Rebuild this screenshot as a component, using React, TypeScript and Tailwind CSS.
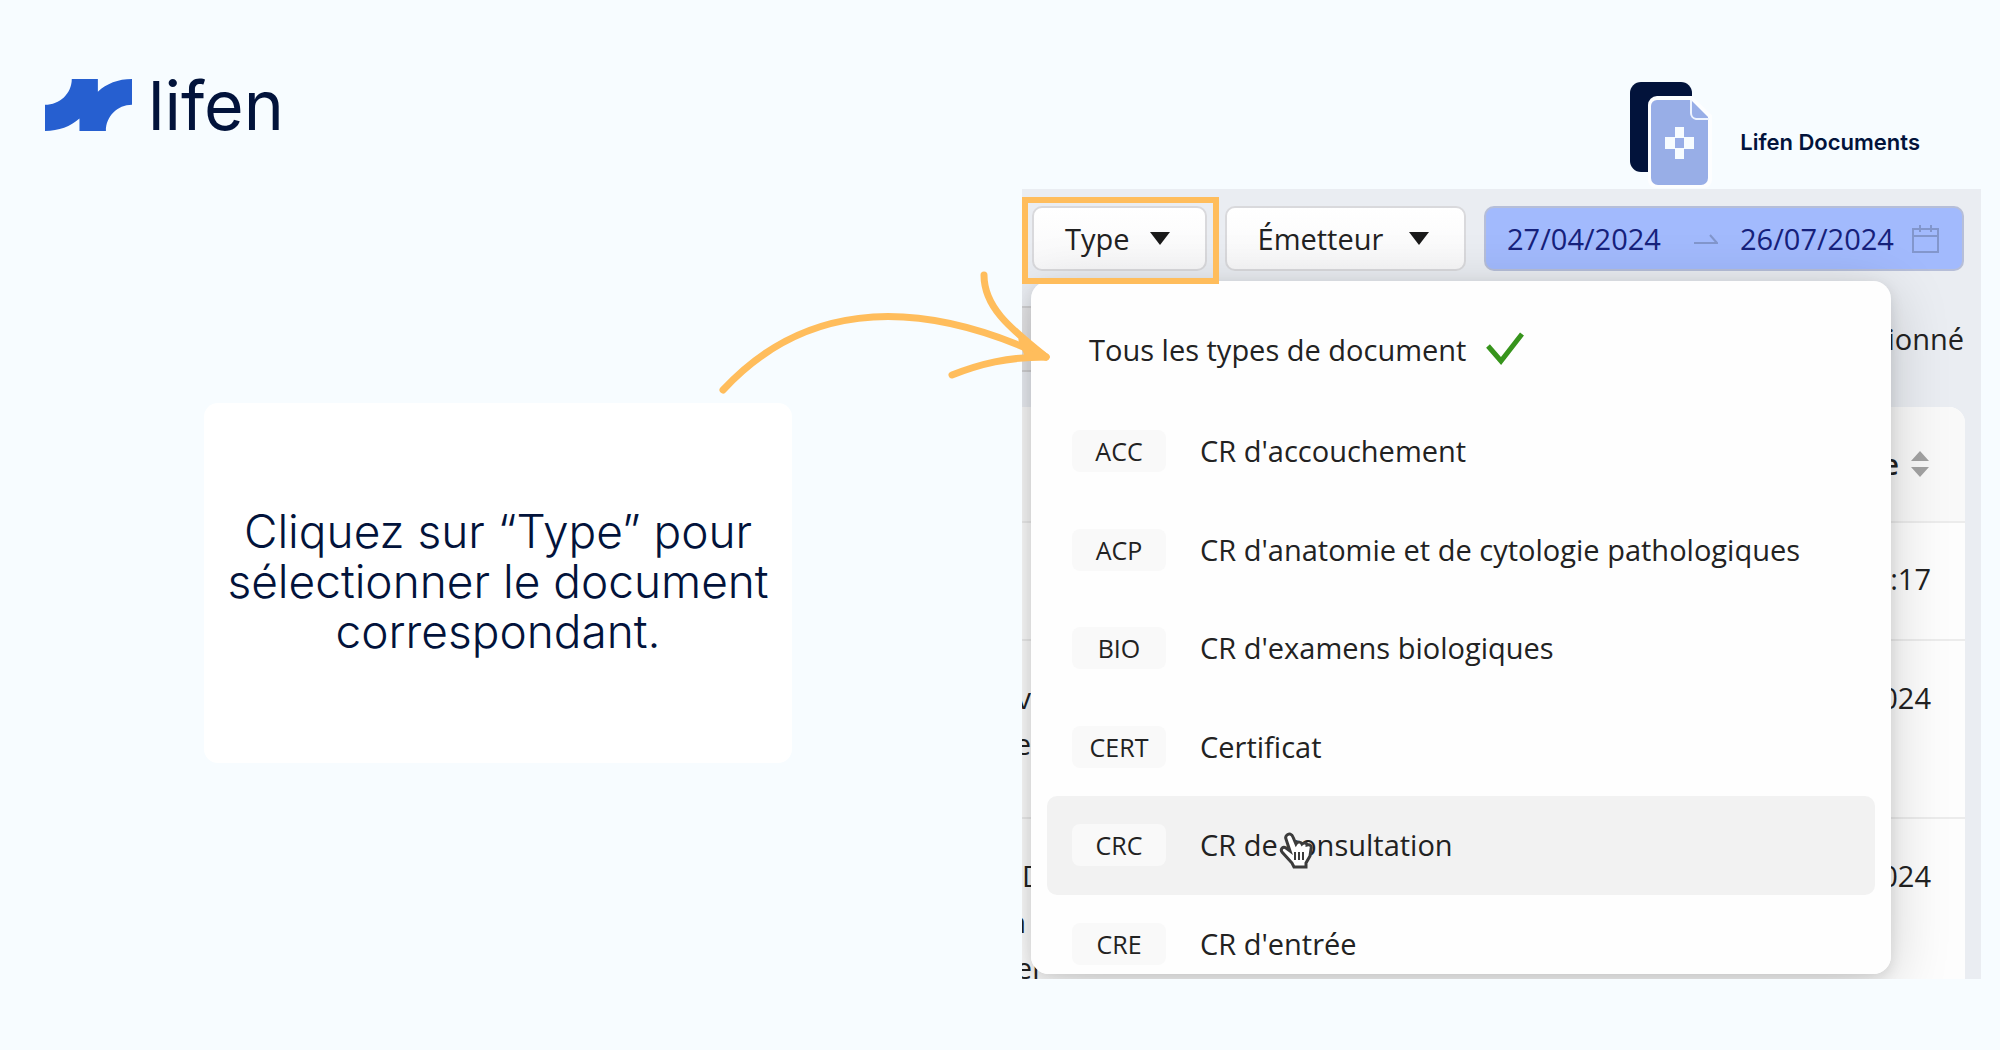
import { useState } from 'react'

const documentTypes = [
  { code: 'ACC', label: "CR d'accouchement" },
  { code: 'ACP', label: "CR d'anatomie et de cytologie pathologiques" },
  { code: 'BIO', label: "CR d'examens biologiques" },
  { code: 'CERT', label: 'Certificat' },
  { code: 'CRC', label: 'CR de consultation' },
  { code: 'CRE', label: "CR d'entrée" },
]

function LifenLogo() {
  return (
    <a href="#" className="flex items-center gap-4">
      <svg viewBox="46 57 260 155" className="w-[87px] h-[52px]" aria-hidden="true">
        <path
          d="M46 134C90 134 126 101 126 57H204V95C230 71 264 57 306 57V134C262 134 228 169 228 212H149V175C122 199 88 212 46 212Z"
          fill="#265fd0"
        />
      </svg>
      <span className="text-[68px] leading-[68px] text-[#02133b]">lifen</span>
    </a>
  )
}

function DocumentsIcon() {
  return (
    <svg viewBox="0 0 82 108" className="w-[82px] h-[108px]" aria-hidden="true">
      <rect x="0" y="2" width="62" height="90" rx="11" fill="#02133b" />
      <path d="M27 16H62L82 35V100A8 8 0 0 1 74 108H26A8 8 0 0 1 18 100V25A9 9 0 0 1 27 16Z" fill="#fdfeff" />
      <path d="M27 20H61L78 37V98A7 7 0 0 1 71 105H28A7 7 0 0 1 21 98V26A6 6 0 0 1 27 20Z" fill="#98aee7" />
      <path d="M61 20V33A6 6 0 0 0 66 39H79" fill="none" stroke="#eef4ff" strokeWidth="2" />
      <path d="M45 47H54V57H64V69H54V79H45V69H35V57H45Z" fill="#f7fcff" />
      <rect x="45" y="58" width="9" height="10" fill="#98aee7" />
    </svg>
  )
}

function Caret() {
  return (
    <svg viewBox="0 0 20 13" className="w-5 h-[13px]" aria-hidden="true">
      <path d="M0 0H20L10 13Z" fill="#1a1a1a" />
    </svg>
  )
}

function FilterButton({ label, className = '', onClick }: { label: string; className?: string; onClick?: () => void }) {
  return (
    <button
      onClick={onClick}
      className={`flex items-center justify-between gap-5 h-[65px] pl-[31px] pr-[35px] rounded-[10px] border-2 border-[#d9d9dc] bg-linear-to-b from-white to-[#f8f8f9] ${className}`}
    >
      {label}
      <Caret />
    </button>
  )
}

function HandPointer() {
  return (
    <svg viewBox="0 0 34 38" className="absolute left-[79px] top-2.5 w-[34px] h-[38px]" aria-hidden="true">
      <path
        d="M8 3C10 1 13 2 14 5L17 12C19 9 22 10 23 12C25 10 28 11 28 13C31 12 33 14 32 17L31 24L27 31V35H15L13 31L3 20C1 17 4 14 7 16L11 19L7 7C6 5 7 4 8 3Z"
        fill="#fff"
        stroke="#3c3c3c"
        strokeWidth="3"
      />
      <path d="M16 20V28M20 20V28M24 20V28" stroke="#3c3c3c" strokeWidth="2" />
    </svg>
  )
}

function Arrow() {
  return (
    <svg
      viewBox="0 0 380 150"
      className="absolute -left-[322px] top-[71px] w-[380px] h-[150px] pointer-events-none"
      fill="none"
      stroke="#ffbd5c"
      strokeWidth="7"
      strokeLinecap="round"
      strokeLinejoin="round"
      aria-hidden="true"
    >
      <path d="M23 130C97 50 203 30 346 97" />
      <path d="M284 15C284 46 308 67 346 97C307 97 280 104 252 115" />
      <path d="M322 80L346 97L328 95Z" fill="#ffbd5c" />
    </svg>
  )
}

function TypeMenu() {
  return (
    <div className="absolute left-[9px] right-[90px] top-[92px] bottom-[5px] overflow-hidden rounded-[18px] bg-[#fefefe] px-4 pt-5">
      <button className="flex items-center gap-5 h-[98px] mb-[3px] pl-[42px]">
        Tous les types de document
        <svg viewBox="0 0 38 33" className="w-[38px] h-[33px] mb-1" aria-hidden="true">
          <path d="M2 14L15 29L36 2" fill="none" stroke="#37941c" strokeWidth="5" />
        </svg>
      </button>
      <ul className="grid grid-rows-6 h-[591px]">
        {documentTypes.map(({ code, label }) => (
          <li key={code}>
            <button
              className={`flex items-center gap-[34px] w-full h-full pl-[25px] rounded-[10px] ${code === 'CRC' ? 'bg-[#f2f2f2]' : ''}`}
            >
              <span className="w-[94px] h-[42px] rounded-lg bg-[#f9f9f9] text-[25px] leading-[42px] text-center">{code}</span>
              <span className="relative">
                {label}
                {code === 'CRC' && <HandPointer />}
              </span>
            </button>
          </li>
        ))}
      </ul>
    </div>
  )
}

export default function App() {
  const [open, setOpen] = useState(true)

  return (
    <div className="min-h-screen bg-[#f7fcff] font-['Inter',sans-serif] text-[#02133b] overflow-hidden">
      <header className="flex justify-between h-[189px] pl-[45px] pr-20">
        <div className="pt-[71px]">
          <LifenLogo />
        </div>
        <div className="flex gap-7 pt-20">
          <DocumentsIcon />
          <span className="pt-[46px] text-[22px] leading-8 font-semibold">Lifen Documents</span>
        </div>
      </header>

      <main className="flex items-start justify-between pr-[19px]">
        <section className="mt-[214px] ml-[204px] w-[588px] h-[360px] pb-1 rounded-[14px] bg-white flex items-center justify-center">
          <p className="text-[46px] leading-[50px] font-light text-center">
            Cliquez sur “Type” pour sélectionner le document correspondant.
          </p>
        </section>

        <section className="relative w-[959px] shrink-0 font-['Open_Sans',sans-serif] text-[29px] leading-[46px] text-[#222]">
          <div className="overflow-hidden bg-[#eaedf2]">
            <div className="flex gap-[18px] pt-[17px] pl-[10px] pr-[17px]">
              <FilterButton label="Type" onClick={() => setOpen(!open)} />
              <FilterButton label="Émetteur" className="grow" />
              <div className="flex items-center w-[480px] h-[65px] pl-[21px] pr-[23px] rounded-[10px] border-2 border-[#b6bed8] bg-[#a2bafd] text-[#16217b]">
                <input aria-label="Date de début" defaultValue="27/04/2024" className="min-w-0 flex-1 bg-transparent" />
                <svg viewBox="0 0 24 10" className="w-6 h-[10px] mr-[22px]" aria-hidden="true">
                  <path d="M0 9H23L16 1" fill="none" stroke="#8296cc" strokeWidth="2" />
                </svg>
                <input aria-label="Date de fin" defaultValue="26/07/2024" className="w-[156px] mr-4 bg-transparent" />
                <svg viewBox="0 0 27 28" className="w-[27px] h-7" fill="none" stroke="#8296cc" strokeWidth="2" aria-hidden="true">
                  <path d="M1 4H26V27H1ZM1 11H26M8 0V7M19 0V7" />
                </svg>
              </div>
            </div>

            <div className="flex items-center justify-between h-[66px] mt-[35px] mb-[35px] pr-[17px]">
              <span className="w-5 h-full border-y-2 border-[#d0d0d2] bg-[#e4e4e6]" />
              <span>ionné</span>
            </div>

            <div className="mr-4 h-[572px] overflow-hidden rounded-tr-[16px] bg-[#fdfdfd]">
              <table className="w-full">
                <thead>
                  <tr className="h-[115px] bg-[#f9f9f9] border-b-2 border-[#ececec]">
                    <th className="p-0" />
                    <th className="p-0 pr-9">
                      <span className="flex items-center justify-end gap-3 font-semibold">
                        e
                        <svg viewBox="0 0 18 26" className="w-[18px] h-[26px]" aria-hidden="true">
                          <path d="M0 10L9 0L18 10ZM0 16H18L9 26Z" fill="#a3a3a3" />
                        </svg>
                      </span>
                    </th>
                  </tr>
                </thead>
                <tbody>
                  <tr className="h-[118px] border-b-2 border-[#ececec]">
                    <td className="p-0" />
                    <td className="p-0 pb-1 pr-[34px] text-right">:17</td>
                  </tr>
                  <tr className="h-[178px] align-top border-b-2 border-[#ececec]">
                    <td className="p-0 pt-[34px]">
                      <span className="flex w-[9px] justify-end overflow-hidden">v</span>
                      <span className="flex w-[9px] justify-end overflow-hidden">e</span>
                    </td>
                    <td className="p-0 pt-[34px] pr-[34px] text-right">024</td>
                  </tr>
                  <tr className="h-[178px] align-top">
                    <td className="p-0 pt-[34px]">
                      <span className="flex w-[9px] overflow-hidden">D</span>
                      <span className="flex w-1 justify-end overflow-hidden">n</span>
                      <span className="flex w-[22px] justify-end overflow-hidden">er</span>
                    </td>
                    <td className="p-0 pt-[34px] pr-[34px] text-right">024</td>
                  </tr>
                </tbody>
              </table>
            </div>
          </div>

          {/* Menu shadow, clipped to the panel */}
          <div className="absolute inset-0 overflow-hidden pointer-events-none">
            <div className="absolute left-[9px] right-[90px] top-[92px] bottom-[5px] rounded-[18px] shadow-[0_12px_60px_rgba(0,0,0,0.18),0_4px_14px_rgba(0,0,0,0.1)]" />
          </div>
          {open && <TypeMenu />}
          <div className="absolute left-0 top-2 w-[197px] h-[87px] border-[6px] border-[#ffbd5c] pointer-events-none" />
          <Arrow />
        </section>
      </main>
    </div>
  )
}
